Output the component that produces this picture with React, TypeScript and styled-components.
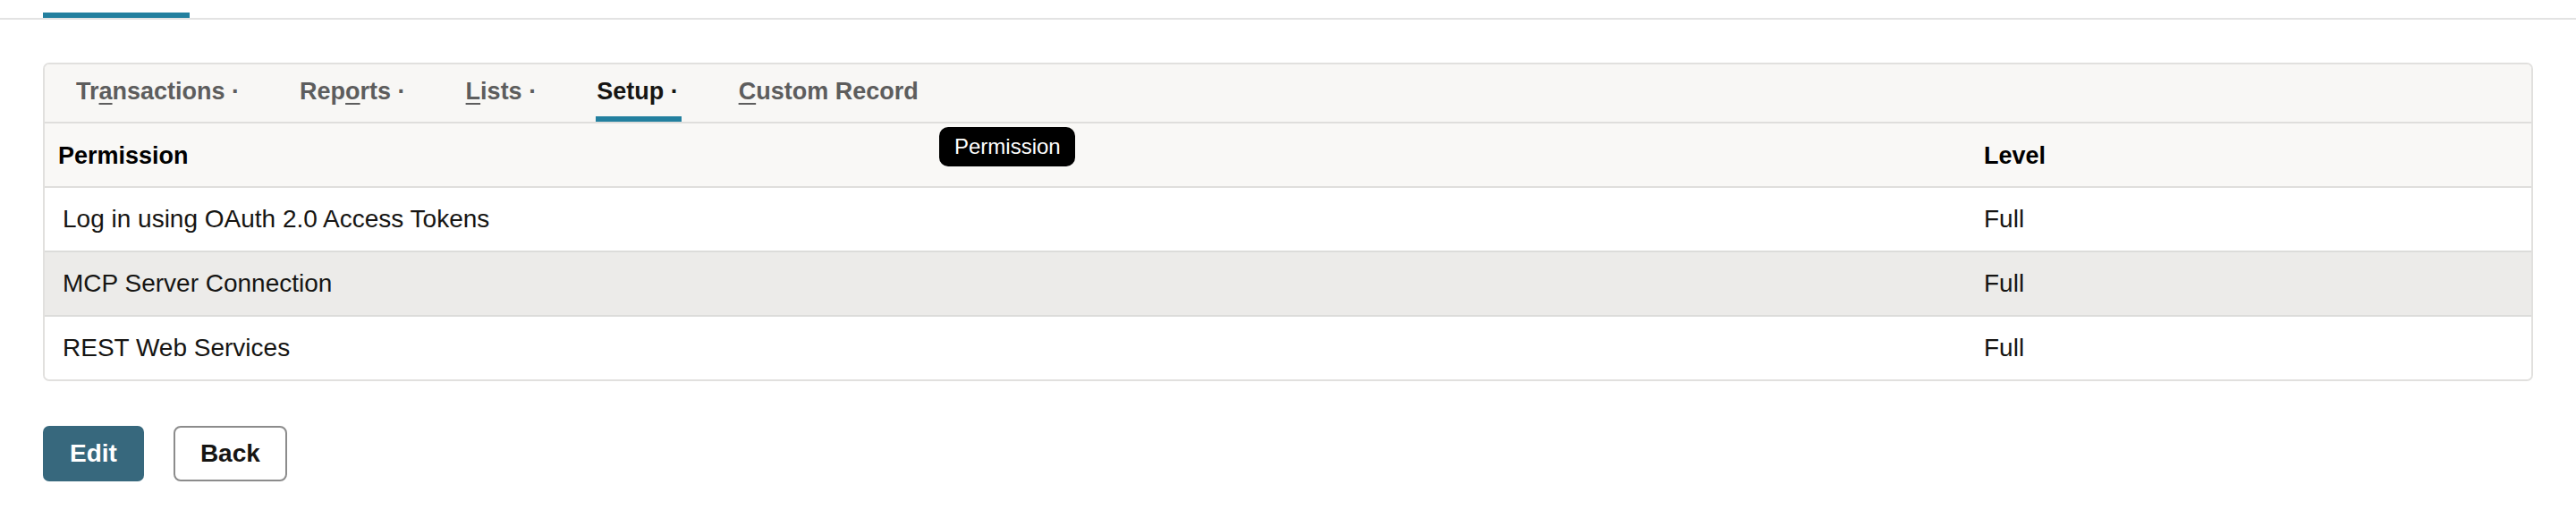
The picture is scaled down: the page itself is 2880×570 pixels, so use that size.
import React from "react";
import styled, { createGlobalStyle, css } from "styled-components";

const GlobalStyle = createGlobalStyle`
  html, body { margin: 0; padding: 0; background: #ffffff; }
  body {
    font-family: "Liberation Sans", Arial, Helvetica, sans-serif;
    color: #161513;
  }
  * { box-sizing: border-box; }
`;

const Page = styled.div`
  display: flex;
  flex-direction: column;
`;

const TopStrip = styled.div`
  display: flex;
  height: 22px;
  padding: 14px 0 0 48px;
  border-bottom: 2px solid #e3e3e3;
`;

const TopIndicator = styled.div`
  width: 164px;
  height: 6px;
  background: #23809f;
`;

const Content = styled.div`
  display: flex;
  flex-direction: column;
  padding: 48px 48px 0;
`;

const Card = styled.div`
  display: flex;
  flex-direction: column;
  border: 2px solid #e1e0de;
  border-radius: 7px;
  overflow: hidden;
  background: #ffffff;
`;

const TabBar = styled.div`
  display: flex;
  gap: 67px;
  height: 66px;
  padding: 0 35px;
  background: #f8f7f5;
  border-bottom: 2px solid #dfdedc;
`;

const Tab = styled.div<{ $active?: boolean }>`
  position: relative;
  display: flex;
  align-items: center;
  padding-bottom: 3px;
  font-size: 27px;
  font-weight: 700;
  white-space: nowrap;
  color: ${(p) => (p.$active ? "#161513" : "#5d5d5d")};
  ${(p) =>
    p.$active &&
    css`
      &::after {
        content: "";
        position: absolute;
        left: -1px;
        right: -3px;
        bottom: 0;
        height: 6px;
        background: #23809f;
      }
    `}
`;

const AccessKey = styled.span`
  text-decoration: underline;
  text-decoration-thickness: 2px;
  text-underline-offset: 4px;
`;

const HeaderRow = styled.div`
  position: relative;
  display: grid;
  grid-template-columns: 1fr 632px;
  height: 72px;
  background: #f9f8f6;
  border-bottom: 2px solid #dfdedc;
`;

const HeaderCell = styled.div<{ $first?: boolean }>`
  display: flex;
  align-items: center;
  padding: 3px 0 0 ${(p) => (p.$first ? 15 : 20)}px;
  font-size: 27px;
  font-weight: 700;
  color: #000000;
`;

const Tooltip = styled.div`
  position: absolute;
  top: 4px;
  left: 1000px;
  display: flex;
  align-items: center;
  height: 44px;
  padding: 0 16px 0 17px;
  border-radius: 10px;
  background: #000000;
  color: #ffffff;
  font-size: 24px;
  white-space: nowrap;
`;

const BodyRow = styled.div<{ $striped?: boolean }>`
  display: grid;
  grid-template-columns: 1fr 632px;
  height: 72px;
  background: ${(p) => (p.$striped ? "#ecebe9" : "#ffffff")};
  border-bottom: 2px solid #dcdcda;
  &:last-child {
    height: 70px;
    border-bottom: none;
  }
`;

const Cell = styled.div`
  display: flex;
  align-items: center;
  padding-left: 20px;
  font-size: 28px;
  color: #161513;
`;

const Actions = styled.div`
  display: flex;
  gap: 33px;
  margin-top: 50px;
`;

const Button = styled.button<{ $primary?: boolean }>`
  height: 62px;
  font-family: inherit;
  font-size: 28px;
  font-weight: 700;
  cursor: pointer;
  ${(p) =>
    p.$primary
      ? css`
          padding: 0 30px;
          border: none;
          border-radius: 7px;
          background: #37687d;
          color: #ffffff;
        `
      : css`
          padding: 0 28px;
          border: 2px solid #8c8c8c;
          border-radius: 8px;
          background: #ffffff;
          color: #161513;
        `}
`;

const rows = [
  { name: "Log in using OAuth 2.0 Access Tokens", level: "Full" },
  { name: "MCP Server Connection", level: "Full" },
  { name: "REST Web Services", level: "Full" },
];

export default function App() {
  return (
    <Page>
      <GlobalStyle />
      <TopStrip>
        <TopIndicator />
      </TopStrip>
      <Content>
        <Card>
          <TabBar>
            <Tab>
              <span>
                Tr<AccessKey>a</AccessKey>nsactions ·
              </span>
            </Tab>
            <Tab>
              <span>
                Rep<AccessKey>o</AccessKey>rts ·
              </span>
            </Tab>
            <Tab>
              <span>
                <AccessKey>L</AccessKey>ists ·
              </span>
            </Tab>
            <Tab $active>
              <span>Setup ·</span>
            </Tab>
            <Tab>
              <span>
                <AccessKey>C</AccessKey>ustom Record
              </span>
            </Tab>
          </TabBar>
          <HeaderRow>
            <HeaderCell $first>Permission</HeaderCell>
            <HeaderCell>Level</HeaderCell>
            <Tooltip>Permission</Tooltip>
          </HeaderRow>
          {rows.map((r, i) => (
            <BodyRow key={r.name} $striped={i === 1}>
              <Cell>{r.name}</Cell>
              <Cell>{r.level}</Cell>
            </BodyRow>
          ))}
        </Card>
        <Actions>
          <Button $primary>Edit</Button>
          <Button>Back</Button>
        </Actions>
      </Content>
    </Page>
  );
}
